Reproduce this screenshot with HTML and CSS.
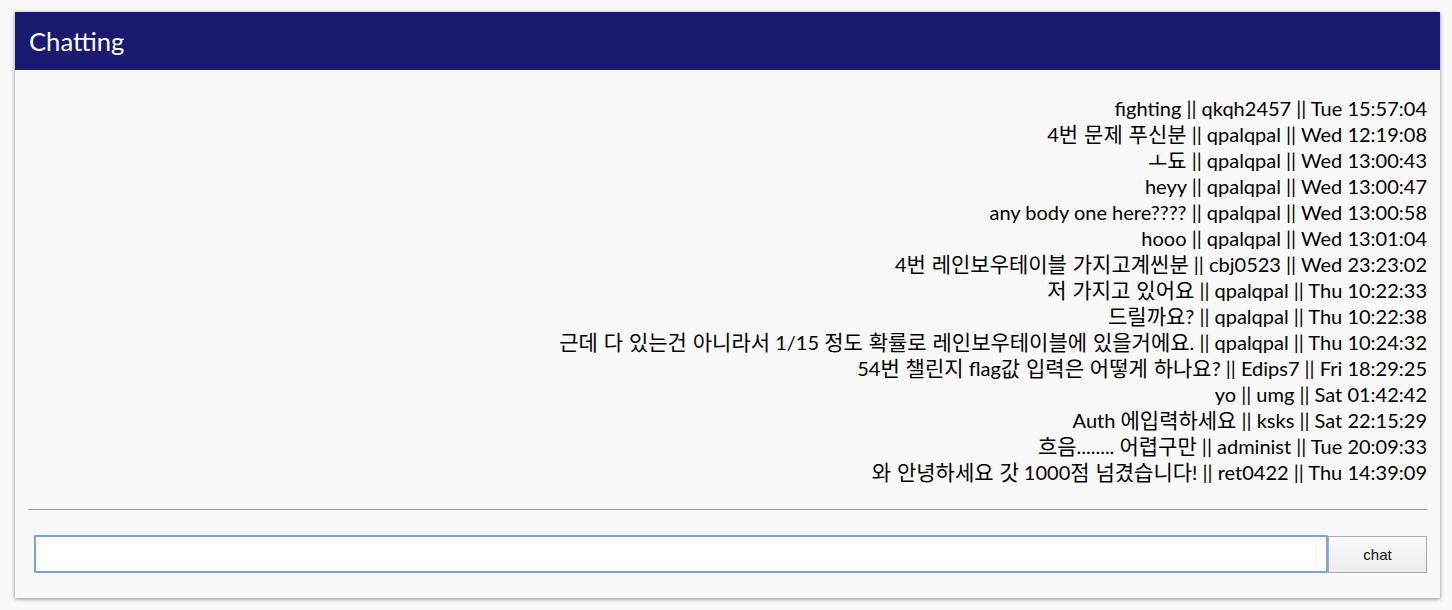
FILE: index.html
```html
<!DOCTYPE html>
<html lang="ko">
<head>
<meta charset="utf-8">
<title>Chatting</title>
<link rel="stylesheet" href="styles.css">
</head>
<body>
<div class="card">
  <div class="card-header">Chatting</div>
  <div class="card-body">
    <div class="messages">
      <div class="msg">fighting || qkqh2457 || Tue 15:57:04</div>
      <div class="msg">4<span class="ko">번 문제 푸신분</span> || qpalqpal || Wed 12:19:08</div>
      <div class="msg"><span class="ko">ㅗ됴</span> || qpalqpal || Wed 13:00:43</div>
      <div class="msg">heyy || qpalqpal || Wed 13:00:47</div>
      <div class="msg">any body one here???? || qpalqpal || Wed 13:00:58</div>
      <div class="msg">hooo || qpalqpal || Wed 13:01:04</div>
      <div class="msg">4<span class="ko">번 레인보우테이블 가지고계씬분</span> || cbj0523 || Wed 23:23:02</div>
      <div class="msg"><span class="ko">저 가지고 있어요</span> || qpalqpal || Thu 10:22:33</div>
      <div class="msg"><span class="ko">드릴까요</span>? || qpalqpal || Thu 10:22:38</div>
      <div class="msg"><span class="ko">근데 다 있는건 아니라서</span> 1/15 <span class="ko">정도 확률로 레인보우테이블에 있을거에요</span>. || qpalqpal || Thu 10:24:32</div>
      <div class="msg">54<span class="ko">번 챌린지</span> flag<span class="ko">값 입력은 어떻게 하나요</span>? || Edips7 || Fri 18:29:25</div>
      <div class="msg">yo || umg || Sat 01:42:42</div>
      <div class="msg">Auth <span class="ko">에입력하세요</span> || ksks || Sat 22:15:29</div>
      <div class="msg"><span class="ko">흐음</span>........ <span class="ko">어렵구만</span> || administ || Tue 20:09:33</div>
      <div class="msg"><span class="ko">와 안녕하세요 갓</span> 1000<span class="ko">점 넘겼습니다</span>! || ret0422 || Thu 14:39:09</div>
    </div>
    <hr class="divider">
    <form class="chat-form">
      <input class="chat-input" type="text">
      <button class="chat-btn" type="button">chat</button>
    </form>
  </div>
</div>
</body>
</html>
```
FILE: styles.css
```css
html, body {
  margin: 0;
  padding: 0;
  background: #f9f9f9;
}
body {
  padding: 12px 12px 12px 15px;
  font-family: Lato, "Noto Sans CJK KR", sans-serif;
}
.card {
  background: #f9f9f9;
  box-shadow: 0 1px 4px rgba(0, 0, 0, 0.45);
}
.card-header {
  background: #191970;
  color: #fff;
  height: 58px;
  display: flex;
  align-items: center;
  padding-left: 14px;
  font-size: 25.6px;
}
.card-body {
  padding: 25px 13px 25px 13px;
}
.messages {
  text-align: right;
  font-size: 20px;
  line-height: 26px;
  color: #000;
}
.msg {
  height: 26px;
}
.ko {
  font-family: "Noto Sans CJK KR", sans-serif;
  font-size: 21px;
  line-height: 1;
}
.divider {
  border: 0;
  border-top: 1px solid #a0a0a0;
  margin: 24px 0 25px 0;
}
.chat-form {
  display: flex;
  margin: 0 0 0 6px;
}
.chat-input {
  flex: 1;
  height: 38px;
  box-sizing: border-box;
  border: 2px solid #7aa4ea;
  border-radius: 1px;
  background: #fff;
  margin: 0;
  outline: none;
}
.chat-btn {
  width: 99px;
  height: 37px;
  box-sizing: border-box;
  border: 1px solid #a9a9a9;
  background: linear-gradient(#fafafa, #ececec);
  font-family: "Liberation Sans", Arial, sans-serif;
  font-size: 15px;
  color: #111;
  margin: 1px 0 0 0;
  border-radius: 0;
}
```
